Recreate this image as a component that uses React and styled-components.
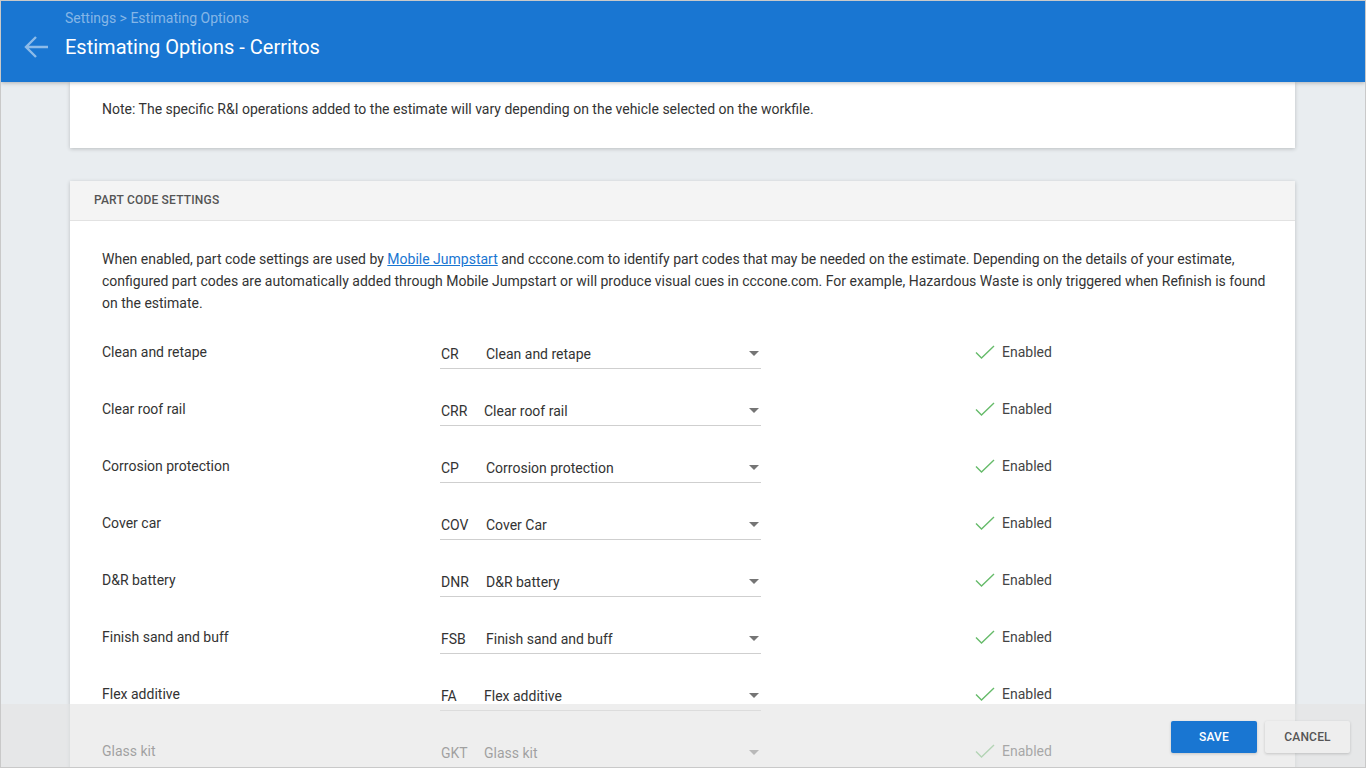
import React from "react";
import styled, { createGlobalStyle } from "styled-components";

const Global = createGlobalStyle`
  html, body { margin: 0; padding: 0; height: 100%; }
  body { font-family: Roboto, "Liberation Sans", Arial, sans-serif; color: #333; }
  * { box-sizing: border-box; }
`;

const Frame = styled.div`
  position: relative;
  height: 768px;
  border: 1px solid #c9c9c9;
  display: flex;
  flex-direction: column;
  overflow: hidden;
  background: #e9edf0;
`;

const Header = styled.header`
  height: 81px;
  flex: none;
  background: #1976d2;
  display: flex;
  align-items: flex-start;
  box-shadow: 0 1px 4px rgba(0, 0, 0, 0.25);
  position: relative;
  z-index: 2;
`;

const BackButton = styled.button`
  border: none;
  background: transparent;
  padding: 0;
  margin: 33px 0 0 21px;
  width: 28px;
  height: 26px;
  display: flex;
  align-items: center;
  justify-content: center;
  cursor: pointer;
`;

const HeaderText = styled.div`
  display: flex;
  flex-direction: column;
  margin-left: 15px;
`;

const Crumb = styled.div`
  font-size: 14px;
  line-height: 20px;
  margin-top: 7px;
  color: rgba(255, 255, 255, 0.48);
`;

const Title = styled.h1`
  margin: 7px 0 0;
  font-size: 20px;
  line-height: 24px;
  font-weight: 400;
  color: #fff;
`;

const Main = styled.main`
  flex: 1;
  overflow: hidden;
  padding: 0 70px 0 69px;
  display: flex;
  flex-direction: column;
  gap: 33px;
`;

const Card = styled.section`
  background: #fff;
  box-shadow: 0 1px 4px rgba(0, 0, 0, 0.2);
  flex: none;
`;

const NoteBody = styled.div`
  padding: 17px 32px 29px;
  font-size: 14px;
  line-height: 20px;
  color: #333;
`;

const CardHeader = styled.div`
  height: 40px;
  background: #f4f4f4;
  border-bottom: 1px solid #e2e2e2;
  display: flex;
  align-items: center;
  padding: 0 24px 2px;
  font-size: 12px;
  font-weight: 500;
  letter-spacing: 0.2px;
  color: #555;
  text-transform: uppercase;
`;

const CardBody = styled.div`
  padding: 27px 24px 0 32px;
`;

const Paragraph = styled.p`
  margin: 0 0 16px;
  font-size: 14px;
  line-height: 22px;
  color: #333;
`;

const Link = styled.a`
  color: #1976d2;
  text-decoration: underline;
`;

const Row = styled.div`
  display: grid;
  grid-template-columns: 338px 321px 1fr;
  height: 57px;
  align-items: start;
`;

const Label = styled.div`
  padding-top: 12px;
  font-size: 14px;
  line-height: 20px;
  color: #333;
`;

const Select = styled.div`
  margin-top: 14px;
  display: flex;
  align-items: center;
  border-bottom: 1px solid #cfcfcf;
  padding: 0 2px 4px 1px;
  font-size: 14px;
  line-height: 20px;
  color: #333;
`;

const Code = styled.span`
  width: ${(p) => (p.$wide ? "43px" : "45px")};
  flex: none;
`;

const OptionName = styled.span`
  flex: 1;
`;

const Caret = styled.span`
  width: 0;
  height: 0;
  border-left: 5px solid transparent;
  border-right: 5px solid transparent;
  border-top: 5px solid #757575;
  margin-top: -2px;
`;

const Status = styled.div`
  padding: 12px 0 0 214px;
  display: flex;
  align-items: center;
  gap: 7px;
  font-size: 14px;
  line-height: 20px;
  color: #444;
`;

const Footer = styled.footer`
  position: absolute;
  left: 0;
  right: 0;
  bottom: -1px;
  height: 64px;
  background: rgba(228, 228, 228, 0.62);
  display: flex;
  align-items: center;
  justify-content: flex-end;
  gap: 8px;
  padding: 2px 15px 0 0;
  z-index: 3;
`;

const Button = styled.button`
  height: 32px;
  width: ${(p) => p.$w}px;
  border: none;
  border-radius: 2px;
  font-family: Roboto, "Liberation Sans", Arial, sans-serif;
  font-size: 12px;
  font-weight: 500;
  letter-spacing: 0.2px;
  cursor: pointer;
  background: ${(p) => (p.$primary ? "#1976d2" : "#eeeeee")};
  color: ${(p) => (p.$primary ? "#fff" : "#555")};
  box-shadow: 0 1px 3px rgba(0, 0, 0, 0.18);
`;

const rows = [
  ["Clean and retape", "CR", "Clean and retape"],
  ["Clear roof rail", "CRR", "Clear roof rail"],
  ["Corrosion protection", "CP", "Corrosion protection"],
  ["Cover car", "COV", "Cover Car"],
  ["D&R battery", "DNR", "D&R battery"],
  ["Finish sand and buff", "FSB", "Finish sand and buff"],
  ["Flex additive", "FA", "Flex additive"],
  ["Glass kit", "GKT", "Glass kit"],
  ["Hazardous waste", "HW", "Hazardous waste"],
];

const Check = () => (
  <svg width="20" height="14" viewBox="0 0 20 14">
    <path d="M1 7.5 L6.5 13 L19 1" fill="none" stroke="#66bb6a" strokeWidth="1.4" />
  </svg>
);

const Arrow = () => (
  <svg width="26" height="24" viewBox="0 0 26 24">
    <path d="M25 12 H3 M13 2 L3 12 L13 22" fill="none" stroke="rgba(255,255,255,0.5)" strokeWidth="2.4" />
  </svg>
);

export default function App() {
  return (
    <>
      <Global />
      <Frame>
        <Header>
          <BackButton aria-label="Back">
            <Arrow />
          </BackButton>
          <HeaderText>
            <Crumb>Settings &gt; Estimating Options</Crumb>
            <Title>Estimating Options - Cerritos</Title>
          </HeaderText>
        </Header>
        <Main>
          <Card>
            <NoteBody>
              Note: The specific R&amp;I operations added to the estimate will vary depending on the vehicle selected on the workfile.
            </NoteBody>
          </Card>
          <Card>
            <CardHeader>Part Code Settings</CardHeader>
            <CardBody>
              <Paragraph>
                When enabled, part code settings are used by <Link href="#">Mobile Jumpstart</Link> and cccone.com to identify part codes that may be needed on the estimate. Depending on the details of your estimate, configured part codes are automatically added through Mobile Jumpstart or will produce visual cues in cccone.com. For example, Hazardous Waste is only triggered when Refinish is found on the estimate.
              </Paragraph>
              {rows.map(([label, code, name]) => (
                <Row key={label}>
                  <Label>{label}</Label>
                  <Select>
                    <Code $wide={code === "CRR" || code === "FA" || code === "GKT"}>{code}</Code>
                    <OptionName>{name}</OptionName>
                    <Caret />
                  </Select>
                  <Status>
                    <Check />
                    Enabled
                  </Status>
                </Row>
              ))}
            </CardBody>
          </Card>
        </Main>
        <Footer>
          <Button $primary $w={86}>SAVE</Button>
          <Button $w={85}>CANCEL</Button>
        </Footer>
      </Frame>
    </>
  );
}
